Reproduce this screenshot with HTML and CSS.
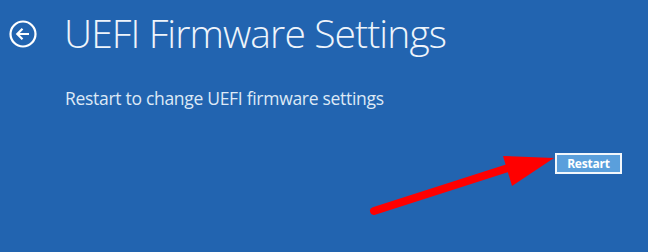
FILE: index.html
```html
<!DOCTYPE html>
<html>
    <head>
        <title>UEFI Firmware Settings</title>
        <link rel="stylesheet" href="styles.css">
    </head>

    <body>
        <div id="page_wrapper">
            <div class="header_row">
                <div class="back_button">
                    <svg width="28" height="28" viewBox="0 0 28 28">
                        <circle cx="14" cy="14" r="12.5" fill="none" stroke="#ffffff" stroke-width="2.2"/>
                        <path d="M20 14 H8.5 M13.5 8.8 L8.3 14 L13.5 19.2" fill="none" stroke="#ffffff" stroke-width="2.2"/>
                    </svg>
                </div>
                <h1 class="title">UEFI Firmware Settings</h1>
            </div>

            <p class="subtitle">Restart to change UEFI firmware settings</p>

            <div class="button_row">
                <button class="restart_button">Restart</button>
            </div>
        </div>

        <svg id="arrow" width="648" height="252" viewBox="0 0 648 252">
            <path d="M374 211 L508 168" stroke="#ff0000" stroke-width="8" stroke-linecap="round"/>
            <polygon points="503,156 512,186 554,158" fill="#ff0000"/>
        </svg>
    </body>
</html>
```

FILE: styles.css
```css
html, body
{
    margin:0;
    padding:0;
}

body
{
    width:648px;
    height:252px;
    background-color:#2264b0;
    font-family:"Open Sans", "Noto Sans", sans-serif;
    position:relative;
    overflow:hidden;
}

#page_wrapper
{
    display:flex;
    flex-direction:column;
    padding:8px 0 0 9px;
}

.header_row
{
    display:flex;
    align-items:center;
    gap:27px;
}

.back_button
{
    width:28px;
    height:28px;
    margin-top:2px;
}

.back_button svg
{
    display:block;
}

.title
{
    margin:0;
    font-size:39px;
    font-weight:300;
    color:#eef4fb;
    line-height:50px;
    letter-spacing:-0.9px;
}

.subtitle
{
    margin:29px 0 0 56px;
    font-size:17.5px;
    color:#dde9f6;
    line-height:22px;
    letter-spacing:-0.3px;
}

.button_row
{
    display:flex;
    justify-content:flex-end;
    padding-right:26px;
    margin-top:44px;
}

.restart_button
{
    width:67px;
    height:21px;
    border:2px solid #f2f7fc;
    background-color:#5a9fdc;
    color:#ffffff;
    font-family:"Open Sans", "Noto Sans", sans-serif;
    font-weight:700;
    font-size:12px;
    padding:0;
    line-height:16px;
    letter-spacing:-0.2px;
}

#arrow
{
    position:absolute;
    left:0;
    top:0;
    pointer-events:none;
}
```
